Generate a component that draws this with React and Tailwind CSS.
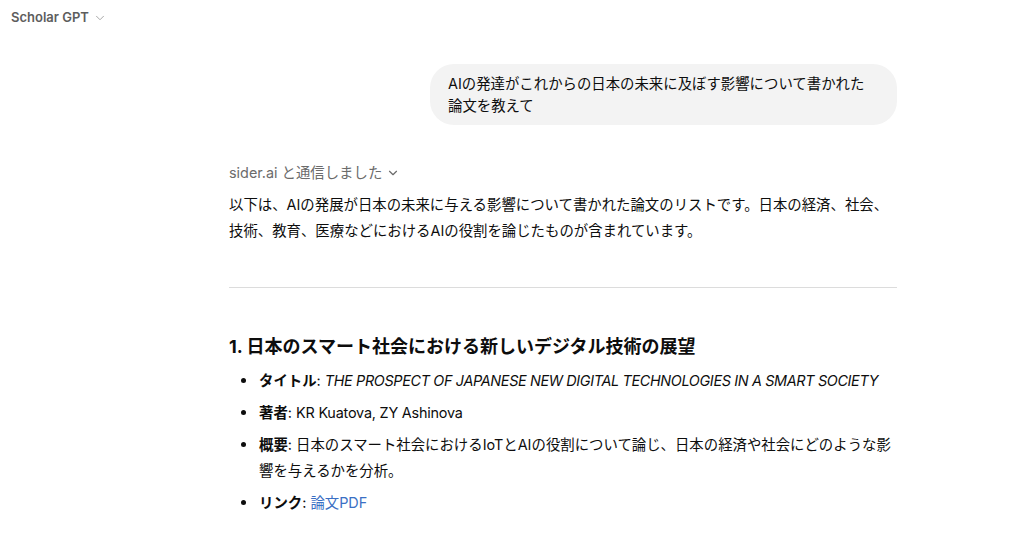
import { ChevronDown } from 'lucide-react';

const font = { fontFamily: '"Inter", "Noto Sans CJK JP", sans-serif' };

const items = [
    {
        label: 'タイトル',
        body: <em className="tracking-[-0.35px]">THE PROSPECT OF JAPANESE NEW DIGITAL TECHNOLOGIES IN A SMART SOCIETY</em>,
    },
    { label: '著者', body: <span className="tracking-[-0.2px]">KR Kuatova, ZY Ashinova</span> },
    {
        label: '概要',
        body: '日本のスマート社会におけるIoTとAIの役割について論じ、日本の経済や社会にどのような影響を与えるかを分析。',
    },
    { label: 'リンク', body: <a className="text-[#3a6fc4]" href="#">論文PDF</a> },
];

const App = () => {
    return (
        <div className="min-h-[541px] w-[1024px] bg-white text-[#0d0d0d]" style={font}>
            {/* Header */}
            <div className="h-[36px] flex items-center gap-1 px-[11px]">
                <span className="text-[13px] font-semibold text-[#5d5d5d]">Scholar GPT</span>
                <ChevronDown className="w-[14px] h-[14px] text-[#9b9b9b]" strokeWidth={1.5} />
            </div>

            <div className="ml-[229px] w-[668px]">
                {/* User message */}
                <div className="mt-[28px] flex justify-end">
                    <div className="w-[467px] bg-[#f3f3f3] rounded-[24px] px-[18px] pt-[9px] pb-[8px] text-[14.4px] leading-[22px]">
                        AIの発達がこれからの日本の未来に及ぼす影響について書かれた
                        <br />
                        論文を教えて
                    </div>
                </div>

                {/* Assistant */}
                <div className="mt-[35px] flex items-center gap-1 text-[14.4px] leading-[26px] text-[#6b6b6b]">
                    <span>sider.ai と通信しました</span>
                    <ChevronDown className="w-[14px] h-[14px]" strokeWidth={2} />
                </div>
                <p className="mt-[6px] text-[14.4px] leading-[26px]">
                    以下は、AIの発展が日本の未来に与える影響について書かれた論文のリストです。日本の経済、社会、技術、教育、医療などにおけるAIの役割を論じたものが含まれています。
                </p>

                <hr className="mt-[43px] border-0 border-t border-[#dcdcdc]" />

                <h3 className="mt-[45px] text-[18px] leading-[28px] font-bold">
                    1. 日本のスマート社会における新しいデジタル技術の展望
                </h3>

                <ul className="mt-[7px] text-[14.4px] leading-[25.5px]">
                    {items.map((item) => (
                        <li key={item.label} className="mb-[6.5px] flex">
                            <span className="w-[30px] shrink-0 flex items-start pt-[10px] pl-[12px]">
                                <span className="w-[5px] h-[5px] rounded-full bg-[#0d0d0d]" />
                            </span>
                            <div className="flex-1">
                                <strong className="font-bold">{item.label}</strong>: {item.body}
                            </div>
                        </li>
                    ))}
                </ul>
            </div>
        </div>
    );
};

export default App;
